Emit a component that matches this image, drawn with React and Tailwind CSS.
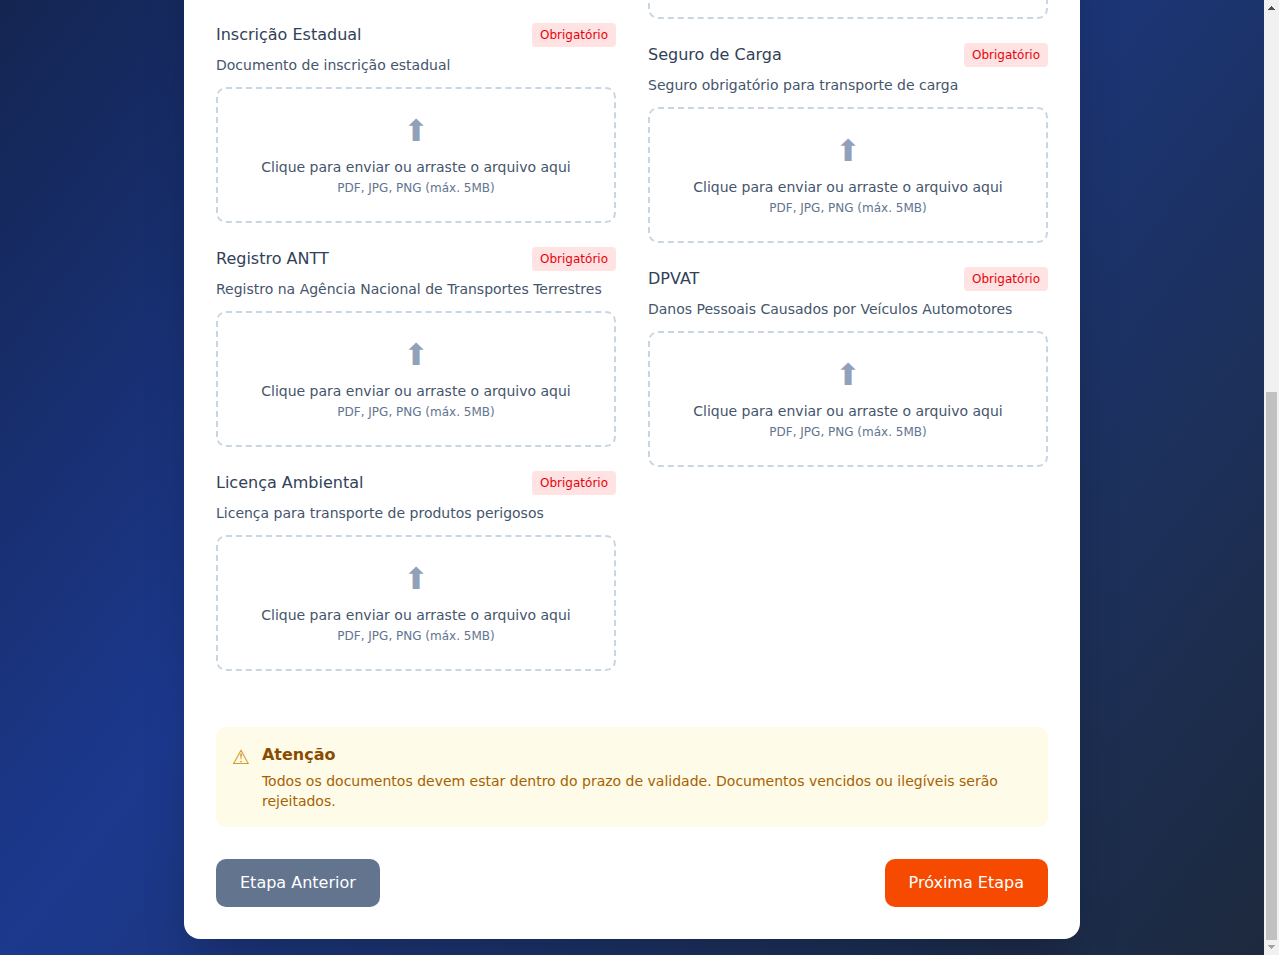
const leftDocuments = [
  { id: 'inscricao', title: 'Inscrição Estadual', description: 'Documento de inscrição estadual' },
  { id: 'antt', title: 'Registro ANTT', description: 'Registro na Agência Nacional de Transportes Terrestres' },
  { id: 'licenca', title: 'Licença Ambiental', description: 'Licença para transporte de produtos perigosos' },
];

const rightDocuments = [
  { id: 'seguro', title: 'Seguro de Carga', description: 'Seguro obrigatório para transporte de carga' },
  { id: 'dpvat', title: 'DPVAT', description: 'Danos Pessoais Causados por Veículos Automotores' },
];

function Dropzone({ id }) {
  return (
    <label
      htmlFor={id}
      className="relative block cursor-pointer rounded-[10px] border-2 border-dashed border-slate-300 p-6 text-center text-sm"
    >
      <input id={id} type="file" accept=".pdf,.jpg,.png" className="sr-only" />
      <span className="mb-2 block text-3xl text-slate-400">⬆</span>
      <span className="block text-slate-600">Clique para enviar ou arraste o arquivo aqui</span>
      <span className="text-xs text-slate-500">PDF, JPG, PNG (máx. 5MB)</span>
    </label>
  );
}

function DocumentField({ id, title, description }) {
  return (
    <section className="mb-6">
      <div className="mb-2 flex items-center justify-between">
        <h3 className="text-base font-medium text-slate-700">{title}</h3>
        <span className="rounded bg-red-100 px-2 py-1 text-xs text-red-600">Obrigatório</span>
      </div>
      <p className="mb-3 text-sm text-slate-600">{description}</p>
      <Dropzone id={id} />
    </section>
  );
}

function ScrollRail() {
  return (
    <div aria-hidden="true" className="flex w-[15px] shrink-0 flex-col items-center bg-[#f1f1f1]">
      <svg width="15" height="15" viewBox="0 0 15 15" shapeRendering="crispEdges" className="shrink-0">
        <path d="M7 6h1v1h1v1h1v1h1v1H4V9h1V8h1V7h1z" fill="#505050" />
      </svg>
      <div className="flex min-h-0 w-full flex-1 flex-col px-[2px]">
        <div className="flex-[377]" />
        <div className="w-[11px] flex-[548] bg-[#c1c1c1]" />
      </div>
      <svg width="15" height="15" viewBox="0 0 15 15" shapeRendering="crispEdges" className="shrink-0">
        <path d="M4 5h7v1h-1v1H9v1H8v1H7V8H6V7H5V6H4z" fill="#a3a3a3" />
      </svg>
    </div>
  );
}

export default function App() {
  return (
    <div className="flex h-screen overflow-hidden font-['DejaVu_Sans',sans-serif]">
      <main className="flex min-w-0 flex-1 flex-col justify-end overflow-hidden bg-linear-to-br from-slate-900 via-blue-900 to-slate-800 bg-size-[100%_1612px] bg-bottom p-4">
        <form className="mx-auto w-full max-w-4xl shrink-0 rounded-2xl bg-white p-8 shadow-2xl">
          <div className="grid grid-cols-2 gap-8">
            <div className="pt-[140px]">
              {leftDocuments.map((doc) => (
                <DocumentField key={doc.id} {...doc} />
              ))}
            </div>
            <div>
              {/* Lower edge of the upload area scrolled past the top */}
              <div className="mb-6 h-[136px] rounded-[10px] border-2 border-dashed border-slate-300" />
              {rightDocuments.map((doc) => (
                <DocumentField key={doc.id} {...doc} />
              ))}
            </div>
          </div>

          <div className="mt-8 flex items-start gap-3 rounded-[10px] bg-yellow-50 p-4">
            <span className="text-xl text-yellow-600">⚠</span>
            <div>
              <h4 className="mb-1 text-base font-bold text-yellow-800">Atenção</h4>
              <p className="text-sm text-yellow-700">
                Todos os documentos devem estar dentro do prazo de validade. Documentos vencidos ou ilegíveis serão
                rejeitados.
              </p>
            </div>
          </div>

          <div className="mt-8 flex justify-between">
            <button type="button" className="rounded-[10px] bg-slate-500 px-6 py-3 text-base font-medium text-white">
              Etapa Anterior
            </button>
            <button type="button" className="rounded-[10px] bg-orange-600 px-6 py-3 text-base font-medium text-white">
              Próxima Etapa
            </button>
          </div>
        </form>
      </main>
      <ScrollRail />
    </div>
  );
}
